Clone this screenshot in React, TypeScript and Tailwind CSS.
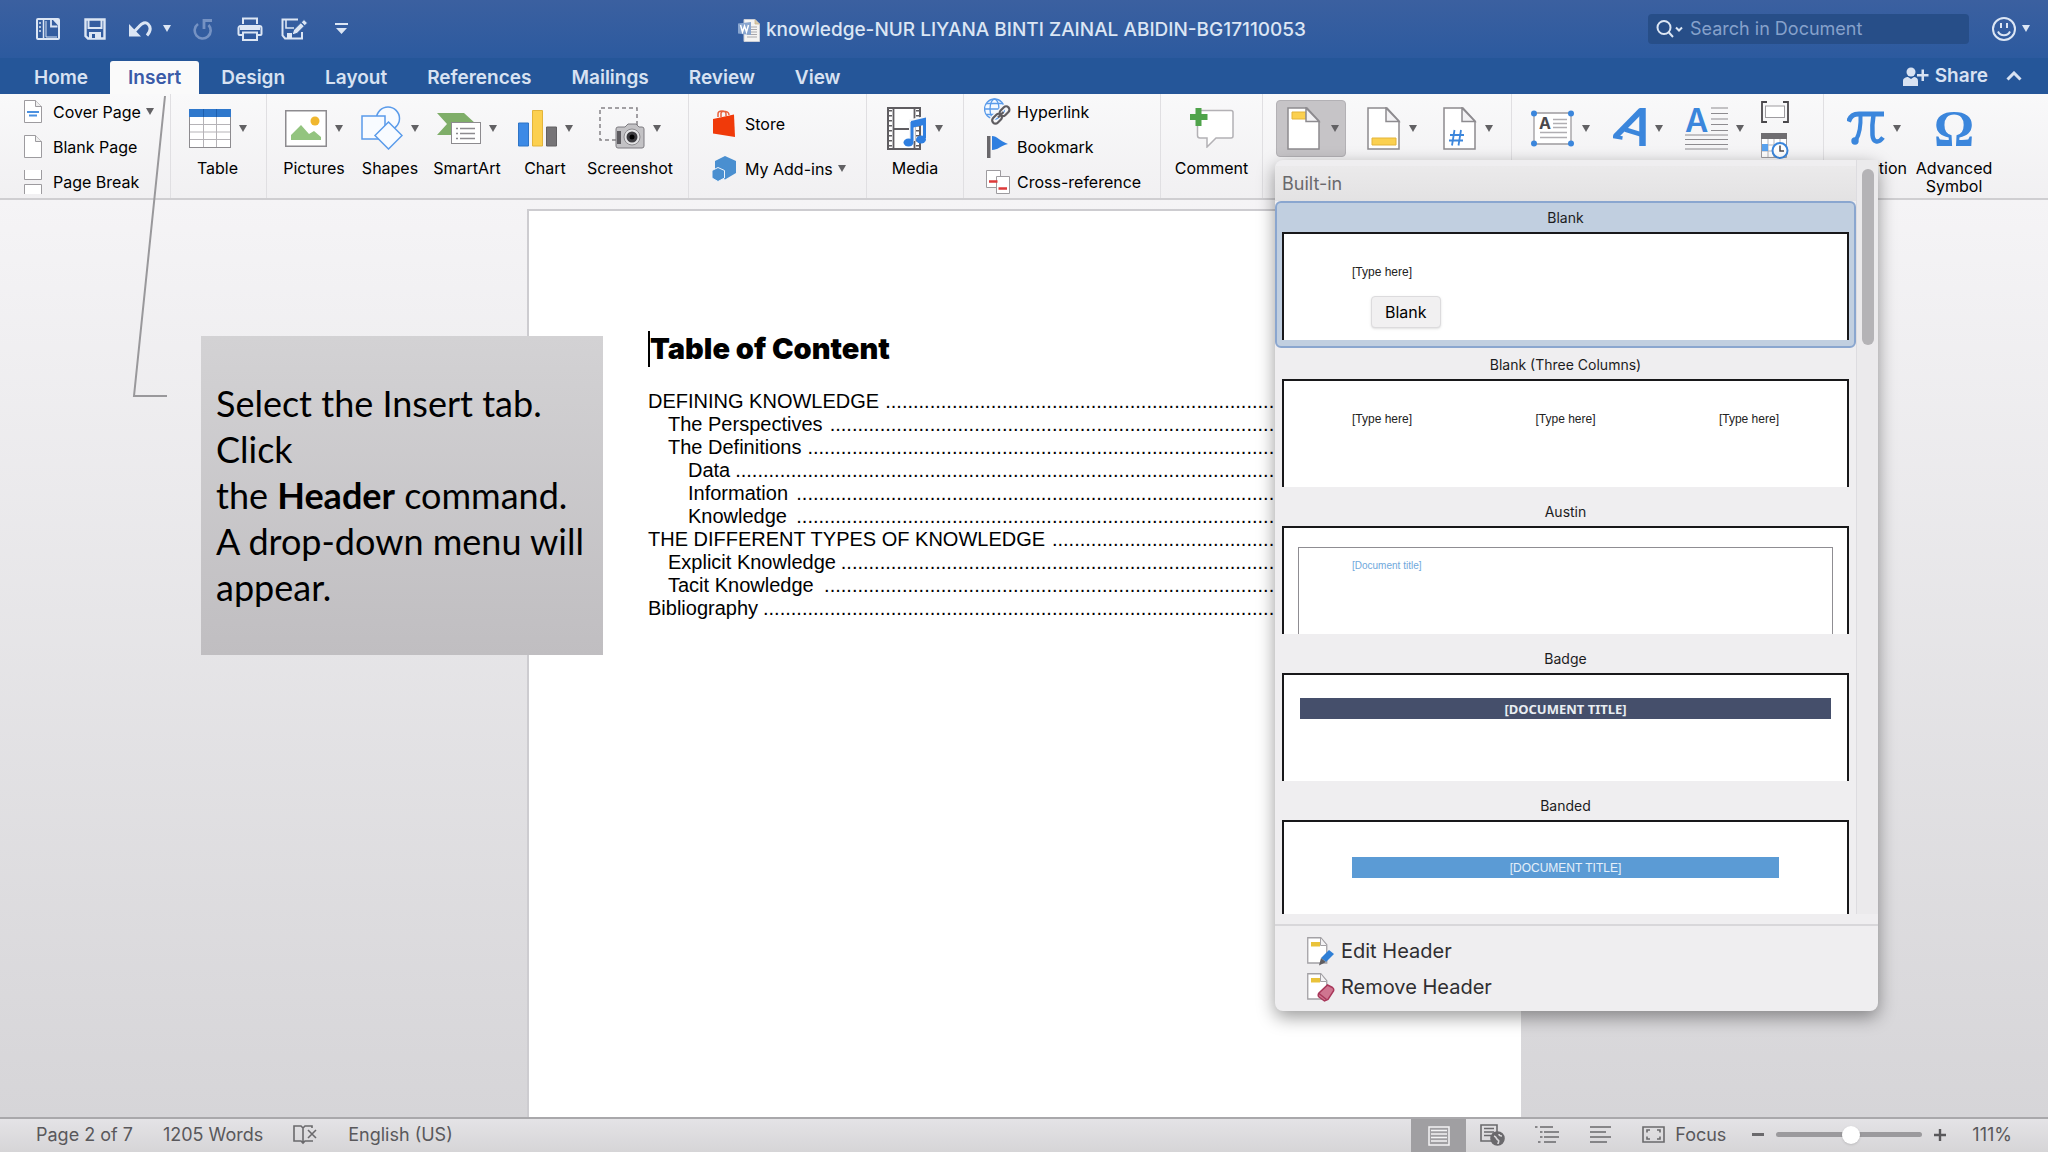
import React from 'react';

const Caret = ({ className = 'text-[#626164]' }: { className?: string }) => (
  <svg width="8" height="7" viewBox="0 0 8 7" className={`shrink-0 ${className}`} aria-hidden="true">
    <path d="M0 0h8L4 7z" fill="currentColor" />
  </svg>
);

/* ---------- quick access icons ---------- */

const SidebarIcon = () => (
  <svg width="24" height="22" viewBox="0 0 24 22" fill="none" stroke="currentColor" strokeWidth="2">
    <rect x="1" y="1" width="22" height="20" rx="1" />
    <path d="M7.500 1v20" strokeWidth="1.500" />
    <path d="M4 4v2M4 8v2M4 12v2" strokeWidth="1.500" />
    <path d="M15 2v6.500h6.500" strokeWidth="1.800" />
    <path d="m16 1 6 6.500V1z" fill="currentColor" stroke="none" />
    <path d="M10 3v16h11" strokeWidth="1" />
  </svg>
);
const SaveIcon = () => (
  <svg width="22" height="22" viewBox="0 0 22 22" fill="none" stroke="currentColor" strokeWidth="2.400">
    <path d="M1.500 1.500h19v19H4l-2.500-2.500z" />
    <path d="M4.500 1.500V10h13V1.500" strokeWidth="2" />
    <path d="M5 21v-7h12v7" fill="currentColor" stroke="none" />
    <path d="M8 16h3v4H8z" fill="#2e5a9d" stroke="none" />
  </svg>
);
const UndoIcon = () => (
  <svg width="24" height="18" viewBox="0 0 24 18" fill="none" stroke="currentColor" strokeWidth="3">
    <path d="M4 14 11 6.500C14 3 17.500 1.500 20 4c3.500 3.500 2 8-1 11.500" />
    <path d="M1 4v12.500h12z" fill="currentColor" stroke="none" />
  </svg>
);
const RedoIcon = () => (
  <svg width="20" height="22" viewBox="0 0 20 22" fill="none" stroke="currentColor" strokeWidth="2.600">
    <path d="M5 6a8 8 0 1 0 10.500 1" />
    <path d="M11 11V2.500h8" strokeWidth="2.800" />
  </svg>
);
const PrintIcon = () => (
  <svg width="26" height="24" viewBox="0 0 26 24" fill="none" stroke="currentColor" strokeWidth="2">
    <path d="M6 7V1.500h14V7" />
    <path d="M5 18H2.500a1 1 0 0 1-1-1V11a2 2 0 0 1 2-2h19a2 2 0 0 1 2 2v6a1 1 0 0 1-1 1H21" />
    <path d="M3 8h20v5H3z" fill="currentColor" stroke="none" />
    <rect x="6" y="15.500" width="14" height="7.500" />
  </svg>
);
const EditSaveIcon = () => (
  <svg width="28" height="22" viewBox="0 0 28 22" fill="none" stroke="currentColor" strokeWidth="2">
    <path d="M17 1.500H1.500v16L4 20.500h17V14" />
    <path d="M5 2v8h8" strokeWidth="1.600" />
    <path d="m11 17 1.500-5L23 1.500l3.500 3.500L16 15.500z" fill="currentColor" stroke="#2e5a9d" strokeWidth="1" />
    <path d="m20 4.500 3.500 3.500" stroke="#2e5a9d" strokeWidth="1.200" />
    <path d="M6 15h5v5H6z" fill="currentColor" stroke="none" />
  </svg>
);
const CustomizeIcon = () => (
  <svg width="13" height="12" viewBox="0 0 13 12" fill="currentColor">
    <path d="M0 0h13v2H0zM1 5h11l-5.500 6z" />
  </svg>
);
const WordDocIcon = () => (
  <svg width="22" height="23" viewBox="0 0 22 23">
    <path d="M6 .5h11L21.500 5v17.500H6z" fill="#f5f4f2" stroke="#c9cdd6" />
    <path d="M17 .5V5h4.500" fill="#d9c9a8" stroke="#c9b48c" strokeWidth=".8" />
    <path d="M9 8h10M9 10.500h10M9 13h10M9 15.500h10M9 18h10" stroke="#a9a8ac" />
    <path d="M0 4.500 13 3v13L0 14.500z" fill="#88a5cf" />
    <path d="m2.500 6 2 7 2-6 2 6L10.500 6" fill="none" stroke="#fff" strokeWidth="1.500" />
  </svg>
);

/* ---------- ribbon icons ---------- */

const CoverPageIcon = () => (
  <svg width="18" height="23" viewBox="0 0 18 23" fill="#fff" stroke="#9d9b9f">
    <path d="M.5.500h11l6 6v16H.5z" />
    <path d="M11.500.5v6h6" fill="#eee" />
    <path d="M3 12h12M5 15.500h8" stroke="#4a90e0" strokeWidth="2" />
  </svg>
);
const BlankPageIcon = () => (
  <svg width="18" height="23" viewBox="0 0 18 23" fill="#fff" stroke="#9d9b9f">
    <path d="M.5.500h11l6 6v16H.5z" />
    <path d="M11.500.5v6h6" fill="#eee" />
  </svg>
);
const PageBreakIcon = () => (
  <svg width="18" height="24" viewBox="0 0 18 24" fill="#fff" stroke="#9d9b9f">
    <path d="M.5 0v9.500h17V0M.5 24v-9.500h17V24" />
  </svg>
);
const TableIcon = () => (
  <svg width="42" height="39" viewBox="0 0 42 39">
    <rect x=".5" y=".5" width="41" height="38" fill="#fff" stroke="#8d8b8f" />
    <path d="M0 0h42v8H0z" fill="#2f78cc" />
    <path d="M14.500 8v30M27.500 8v30M1 15.500h40M1 23h40M1 30.500h40" stroke="#b5b3b7" />
    <path d="M14.500 0v8M27.500 0v8" stroke="#1d5fae" />
  </svg>
);
const PicturesIcon = () => (
  <svg width="42" height="37" viewBox="0 0 42 37">
    <rect x=".75" y=".75" width="40.500" height="35.500" fill="#fff" stroke="#8d8b8f" strokeWidth="1.500" />
    <path d="M6 30V25l10-10 8 9 5-3 7 6v3z" fill="#93c47f" />
    <circle cx="30" cy="11" r="4.500" fill="#f0b72f" />
  </svg>
);
const ShapesIcon = () => (
  <svg width="42" height="44" viewBox="0 0 42 44" fill="#f8fbff" stroke="#5a9bea" strokeWidth="1.500">
    <circle cx="27" cy="12.500" r="11.500" />
    <path d="M1 10h23v23H1z" />
    <path d="m27.500 16 13.500 13.500L27.500 43 14 29.500z" />
  </svg>
);
const SmartArtIcon = () => (
  <svg width="44" height="33" viewBox="0 0 44 33">
    <path d="M0 1h27l12 11-12 11H0l10-11z" fill="#7fae69" />
    <rect x="14.500" y="10.500" width="29" height="21" fill="#fff" stroke="#8d8b8f" />
    <path d="M23 16.500h15M23 21.500h15M23 26.500h15M19 16.500h2M19 21.500h2M19 26.500h2" stroke="#8d8b8f" strokeWidth="1.400" />
  </svg>
);
const ChartIcon = () => (
  <svg width="39" height="37" viewBox="0 0 39 37">
    <path d="M.5 13h10v23H.5z" fill="#3d8ae6" stroke="#2f74c6" />
    <path d="M14.500.5h10V36h-10z" fill="#fcd04f" stroke="#e3b43a" />
    <path d="M28.500 17h10v19h-10z" fill="#767477" stroke="#626063" />
  </svg>
);
const ScreenshotIcon = () => (
  <svg width="46" height="42" viewBox="0 0 46 42">
    <path d="M17 33H1V1h37v17" fill="none" stroke="#858387" strokeWidth="1.500" strokeDasharray="4 3" />
    <path d="M17 22a2 2 0 0 1 2-2h7l3-3h8l3 3h3a2 2 0 0 1 2 2v17a2 2 0 0 1-2 2H19a2 2 0 0 1-2-2z" fill="#c3c2c5" stroke="#7d7b80" />
    <path d="M18 24h4v13h-4z" fill="#5d5b60" />
    <circle cx="33" cy="30" r="8" fill="#e4e4e6" stroke="#8d8b8f" />
    <circle cx="33" cy="30" r="5.500" fill="#3d3c40" />
    <circle cx="33" cy="30" r="2.500" fill="#000" />
  </svg>
);
const StoreIcon = () => (
  <svg width="23" height="27" viewBox="0 0 23 27">
    <path d="M6 7V4c0-4 8-4 8 0v2M9 7V3c1-3 8-2 8 2" fill="none" stroke="#e8613c" strokeWidth="1.500" />
    <path d="M1 9 22 4.500 23 27 1 23.500z" fill="#f03a0a" />
  </svg>
);
const AddinsIcon = () => (
  <svg width="25" height="26" viewBox="0 0 25 26">
    <path d="m13 0 11 5v12l-11 6.500L3 18V5z" fill="#4a8fd0" />
    <path d="m6 11.500 6.500 3v7.500L6 25.500 0 22v-7.500z" fill="#4a8fd0" stroke="#eef4fb" />
  </svg>
);
const MediaIcon = () => (
  <svg width="40" height="43" viewBox="0 0 40 43">
    <path d="M1 1h32v41H1z" fill="#fff" stroke="#5f5d61" strokeWidth="2" />
    <path d="M6.500 1v41M27.500 1v41M6.500 22h21" stroke="#5f5d61" strokeWidth="1.800" />
    <path d="M3.500 3v38M30.500 3v38" stroke="#5f5d61" strokeWidth="3" strokeDasharray="1.500 3.500" />
    <path d="M25 34V15l13-3v20" fill="none" stroke="#f6f6f7" strokeWidth="6" />
    <path d="M24 14l15-3.500v7L24 21z" fill="#2f7fe0" />
    <path d="M25 34V15M37.500 31V12" stroke="#2f7fe0" strokeWidth="3" />
    <ellipse cx="21.500" cy="35.500" rx="5" ry="4" fill="#2f7fe0" />
    <ellipse cx="34" cy="32.500" rx="5" ry="4" fill="#2f7fe0" />
  </svg>
);
const HyperlinkIcon = () => (
  <svg width="27" height="27" viewBox="0 0 27 27" fill="none">
    <g stroke="#5a9bea" strokeWidth="1.300">
      <circle cx="10.500" cy="11" r="10" fill="#f4f9ff" />
      <ellipse cx="10.500" cy="11" rx="4.500" ry="10" />
      <path d="M.5 11h20M2.500 5.500h16M2.500 16.500h16" />
    </g>
    <g stroke="#f6f6f7" strokeWidth="5">
      <rect x="15" y="10" width="11" height="6.500" rx="3.200" transform="rotate(-45 20.500 13.200)" />
      <rect x="7.500" y="17.500" width="11" height="6.500" rx="3.200" transform="rotate(-45 13 20.700)" />
    </g>
    <g stroke="#5f5d61" strokeWidth="2.200">
      <rect x="15" y="10" width="11" height="6.500" rx="3.200" transform="rotate(-45 20.500 13.200)" />
      <rect x="7.500" y="17.500" width="11" height="6.500" rx="3.200" transform="rotate(-45 13 20.700)" />
      <path d="m14 19.500 5.500-5.500" />
    </g>
  </svg>
);
const BookmarkIcon = () => (
  <svg width="21" height="24" viewBox="0 0 21 24">
    <path d="M0 1h3.500v22H0z" fill="#69676b" />
    <path d="M5 1c5 0 8 5 16 8-8 2-10 6-16 6z" fill="#2f7fe0" />
  </svg>
);
const CrossRefIcon = () => (
  <svg width="24" height="24" viewBox="0 0 24 24">
    <path d="M.5.5h14v17H.5z" fill="#fff" stroke="#9d9b9f" />
    <path d="M10.500 6.500h13v17h-13z" fill="#fff" stroke="#9d9b9f" />
    <path d="M3 11.500h8.500M12.500 18.500h8.500" stroke="#dd3a3a" strokeWidth="2.400" />
  </svg>
);
const CommentIcon = () => (
  <svg width="44" height="40" viewBox="0 0 44 40">
    <path d="M10 2.500h31a2 2 0 0 1 2 2V28a2 2 0 0 1-2 2H26l-9 9v-9h-7a2.500 2.500 0 0 1-2.500-2.500V5z" fill="#fff" stroke="#b3b1b5" strokeWidth="1.500" />
    <path d="M5.500 0h6v6h6v6h-6v6h-6v-6H0V6h5.500z" fill="#4fa34a" />
  </svg>
);
const PageShape = ({ children }: { children: React.ReactNode }) => (
  <svg width="34" height="43" viewBox="0 0 34 43">
    <path d="M1 1h19l12 13v28H1z" fill="#fff" stroke="#8d8b8f" strokeWidth="1.500" />
    {children}
    <path d="M19 1v13.500h13z" fill="#f3f2f4" stroke="#8d8b8f" strokeWidth="1.500" />
  </svg>
);
const HeaderIcon = () => (
  <PageShape>
    <path d="M5 5h14v7H5z" fill="#fbd04f" stroke="#e3b43a" />
  </PageShape>
);
const FooterIcon = () => (
  <PageShape>
    <path d="M5 31h24v7H5z" fill="#fbd04f" stroke="#e3b43a" />
  </PageShape>
);
const PageNumberIcon = () => (
  <PageShape>
    <path d="M11.500 23 9 38.500M18 23l-2.500 15.500M7 28h14M6 33.500h14" stroke="#3b86dc" strokeWidth="1.800" />
  </PageShape>
);
const TextBoxIcon = () => (
  <svg width="43" height="37" viewBox="0 0 43 37">
    <path d="M3 3h37v31H3z" fill="#fff" stroke="#9d9b9f" strokeWidth="1.300" />
    <text x="8" y="19" fontFamily="Inter" fontWeight="700" fontSize="16" fill="#4a484c">A</text>
    <path d="M22 9.500h14M22 13.500h14M22 17.500h14M9 22.500h27M9 27.500h27" stroke="#b0aeb2" strokeWidth="1.300" />
    <g fill="#3b86dc">
      <circle cx="3" cy="3.500" r="3" /><circle cx="40" cy="3.500" r="3" />
      <circle cx="3" cy="33.500" r="3" /><circle cx="40" cy="33.500" r="3" />
    </g>
  </svg>
);
const WordArtIcon = () => (
  <svg width="34" height="42" viewBox="0 0 34 42" fill="none" stroke="#3b86dc">
    <path d="M2.500 29.500 28 3.500" strokeWidth="6" />
    <path d="M29.500 1v38" strokeWidth="6.500" />
    <path d="M12 22.500 30 28" strokeWidth="4.500" />
    <path d="M0 29.500 9.500 31" strokeWidth="3.500" />
  </svg>
);
const DropCapIcon = () => (
  <svg width="43" height="43" viewBox="0 0 43 43" fill="none">
    <text x="0" y="25" fontFamily="Inter" fontWeight="600" fontSize="32" fill="#3b86dc">A</text>
    <path d="M26 1h17M26 6.500h17M26 12h17M26 17.500h17M26 23.500h17M0 28h43M0 32.500h43M0 37.500h43M0 42h43" stroke="#8d8b8f" strokeWidth="1.200" />
  </svg>
);
const FieldIcon = () => (
  <svg width="28" height="22" viewBox="0 0 28 22" fill="none">
    <path d="M6 1H1v20h5M22 1h5v20h-5" stroke="#4a484c" strokeWidth="1.800" />
    <rect x="4.500" y="5" width="19" height="11.500" fill="#fff" stroke="#9d9b9f" />
  </svg>
);
const DateTimeIcon = () => (
  <svg width="28" height="26" viewBox="0 0 28 26">
    <path d="M.5.500h25v24H.5z" fill="#fff" stroke="#9d9b9f" />
    <path d="M0 0h26v6H0z" fill="#6f6d71" />
    <path d="M7 6v18M13 6v18M19 6v18M1 12h24M1 18h24" stroke="#b5b3b7" />
    <path d="M1 11h6v7H1z" fill="#5aa2ee" />
    <circle cx="19" cy="17.500" r="7.500" fill="#fff" stroke="#3b86dc" strokeWidth="2" />
    <path d="M19 12.500V18h4" fill="none" stroke="#4a484c" strokeWidth="1.500" />
  </svg>
);
const EquationIcon = () => (
  <svg width="38" height="36" viewBox="0 0 38 36" fill="none" stroke="#3b86dc">
    <path d="M1.500 11.500C4 5.500 6.500 4 12 4h25" strokeWidth="5" />
    <path d="M13.500 5c.5 12-1 19-4.500 25" strokeWidth="4" />
    <circle cx="8" cy="31" r="3.700" fill="#3b86dc" stroke="none" />
    <path d="M26.500 5c-1.500 9-1.500 14-1 20 .5 7 5.500 9 10.500 2.500" strokeWidth="4.500" />
  </svg>
);

/* ---------- ribbon building blocks ---------- */

const BigButton = ({ icon, label, caret, width }: { icon: React.ReactNode; label?: React.ReactNode; caret?: boolean; width: string }) => (
  <button type="button" className={`flex shrink-0 flex-col items-center gap-2 pt-[11px] ${width}`}>
    <span className="flex h-[46px] items-center gap-2">
      {icon}
      {caret && <Caret />}
    </span>
    {label && <span className="text-center text-base leading-[18px]">{label}</span>}
  </button>
);

const SmallButton = ({ icon, label, caret, iconBox }: { icon: React.ReactNode; label: string; caret?: boolean; iconBox: string }) => (
  <button type="button" className="flex h-[35px] shrink-0 items-center whitespace-nowrap text-base leading-[18px]">
    <span className={`flex shrink-0 items-center ${iconBox}`}>{icon}</span>
    {label}
    {caret && <span className="ml-[5px]"><Caret /></span>}
  </button>
);

const Group = ({ children, className }: { children: React.ReactNode; className: string }) => (
  <div className={`relative flex shrink-0 border-r border-[#e0dfe2] ${className}`}>{children}</div>
);

/* ---------- header gallery ---------- */

const GalleryItem = ({ name, selected, children }: { name: string; selected?: boolean; children: React.ReactNode }) => (
  <button
    type="button"
    aria-pressed={!!selected}
    className={`flex h-[147px] w-full shrink-0 flex-col px-[5px] text-left ${selected ? 'rounded-md border-2 border-[#8aa6cf] bg-[#c1cfe0]' : 'border-2 border-transparent'}`}
  >
    <span className="flex h-[29px] w-full items-center justify-center text-sm text-[#1c1c1e]">{name}</span>
    <span className="relative block h-[108px] w-full border-2 border-b-0 border-[#18181a] bg-white">{children}</span>
  </button>
);

const TypeHere = () => <span className="text-xs text-[#222]">[Type here]</span>;

const EditHeaderIcon = () => (
  <svg width="28" height="29" viewBox="0 0 28 29">
    <path d="M.75.75h13l6 7V26H.75z" fill="#fff" stroke="#a3a1a5" strokeWidth="1.300" />
    <path d="M4 5h9v4.500H4z" fill="#e9c23a" />
    <path d="M13.500 1v7.500h6" fill="#f3f2f4" stroke="#a3a1a5" />
    <path d="m14 21 8-8 5 4-8 8z" fill="#2f7fd6" />
    <path d="m14 21 5 4-7 3.500z" fill="#5f5d61" />
  </svg>
);
const RemoveHeaderIcon = () => (
  <svg width="28" height="29" viewBox="0 0 28 29">
    <path d="M.75.75h13l6 7V26H.75z" fill="#fff" stroke="#a3a1a5" strokeWidth="1.300" />
    <path d="M4 5h9v4.500H4z" fill="#e9c23a" />
    <path d="M13.500 1v7.500h6" fill="#f3f2f4" stroke="#a3a1a5" />
    <path d="m20.500 12 5 2.500c1.500 1 1.500 2 1 3.500l-5.500 8.500-3.500 1.500-5.500-4c-1-1-1-2.500 0-4z" fill="#cf7590" stroke="#a8375a" strokeWidth="1.500" />
    <path d="m12 20.500 7.500 6" stroke="#a8375a" strokeWidth="1.500" />
  </svg>
);

const HeaderMenu = () => (
  <div className="absolute -left-px top-[60px] z-20 w-[603px] rounded-lg bg-[#efeef0] shadow-[0_6px_18px_rgba(0,0,0,0.4)]">
    <div className="flex">
      <div className="min-w-0 flex-1 border-r border-[#dddce0]">
        <h2 className="mt-1.5 h-[35px] bg-gradient-to-b from-[#ebeaeb] to-[#e3e2e3] pl-[7px] text-lg leading-9 text-[#6a696c]">Built-in</h2>
        <div className="flex h-[713px] flex-col overflow-hidden">
          <GalleryItem name="Blank" selected>
            <span className="flex px-[68px] pt-[30px] font-['Liberation_Sans',sans-serif]"><TypeHere /></span>
            <span role="tooltip" className="absolute left-[87px] top-[62px] rounded border border-[#dcdbdd] bg-[#f1f0f1] px-[13px] py-1 text-base leading-[22px] text-black shadow">Blank</span>
          </GalleryItem>
          <GalleryItem name="Blank (Three Columns)">
            <span className="flex justify-between px-[68px] pt-[30px] font-['Liberation_Sans',sans-serif]"><TypeHere /><TypeHere /><TypeHere /></span>
          </GalleryItem>
          <GalleryItem name="Austin">
            <span className="flex h-full px-3.5 pt-[19px]">
              <span className="block flex-1 border border-b-0 border-[#8f8d92] px-[53px] pt-2.5 font-['Liberation_Sans',sans-serif] text-[10px] leading-4 text-[#6fa8dc]">[Document title]</span>
            </span>
          </GalleryItem>
          <GalleryItem name="Badge">
            <span className="mx-4 mt-[23px] flex h-[21px] items-center justify-center bg-[#454f6b] font-['Noto_Sans',sans-serif] text-[13px] font-bold leading-5 text-[#e8edf2]">[DOCUMENT TITLE]</span>
          </GalleryItem>
          <GalleryItem name="Banded">
            <span className="mx-[68px] mt-[35px] flex h-[21px] items-center justify-center bg-[#5b9bd5] font-['Liberation_Sans',sans-serif] text-xs text-[#e6f0fa]">[DOCUMENT TITLE]</span>
          </GalleryItem>
        </div>
      </div>
      <div className="flex w-[21px] justify-center bg-[#ebeaec] pt-[9px]">
        <div className="h-[176px] w-3 rounded-full bg-[#b4b3b6]" />
      </div>
    </div>
    <div className="mt-2.5 flex flex-col border-t-2 border-[#d8d7da] pb-1.5 pl-8 pt-[7px]">
      <button type="button" className="flex h-9 items-center gap-1.5 text-xl text-[#2f2e31]"><EditHeaderIcon />Edit Header</button>
      <button type="button" className="flex h-9 items-center gap-1.5 text-xl text-[#2f2e31]"><RemoveHeaderIcon />Remove Header</button>
    </div>
  </div>
);

/* ---------- document ---------- */

const toc = [
  { text: 'DEFINING KNOWLEDGE', indent: 'pl-0', dots: 93 },
  { text: 'The Perspectives', indent: 'pl-5', dots: 103 },
  { text: 'The Definitions', indent: 'pl-5', dots: 107 },
  { text: 'Data', indent: 'pl-10', dots: 120 },
  { text: 'Information', indent: 'pl-10', dots: 109 },
  { text: 'Knowledge', indent: 'pl-10', dots: 109 },
  { text: 'THE DIFFERENT TYPES OF KNOWLEDGE', indent: 'pl-0', dots: 63 },
  { text: 'Explicit Knowledge', indent: 'pl-5', dots: 101 },
  { text: 'Tacit Knowledge', indent: 'pl-5', dots: 104 },
  { text: 'Bibliography', indent: 'pl-0', dots: 115 },
];

const tabs = ['Home', 'Insert', 'Design', 'Layout', 'References', 'Mailings', 'Review', 'View'];

export default function App() {
  return (
    <div className="flex min-h-screen flex-col overflow-hidden bg-[#d7d6d9] font-[Inter,sans-serif] text-black">
      {/* title bar */}
      <header className="grid h-[58px] grid-cols-[1fr_auto_1fr] items-center bg-gradient-to-b from-[#3b60a0] to-[#2c5a9f] text-[#dce6f4]">
        <div className="flex items-center pb-px pl-9">
          <button type="button" aria-label="Sidebar" className="w-12"><SidebarIcon /></button>
          <button type="button" aria-label="Save" className="w-11"><SaveIcon /></button>
          <button type="button" aria-label="Undo" className="flex w-[65px] items-center gap-[11px]"><UndoIcon /><Caret className="text-[#dce6f4]" /></button>
          <button type="button" aria-label="Redo" className="w-11 text-[#7592c3]"><RedoIcon /></button>
          <button type="button" aria-label="Print" className="w-11"><PrintIcon /></button>
          <button type="button" aria-label="Save as" className="w-[54px]"><EditSaveIcon /></button>
          <button type="button" aria-label="Customize toolbar"><CustomizeIcon /></button>
        </div>
        <h1 className="flex items-center gap-1.5 whitespace-nowrap pr-1 pt-0.5 text-[19px] font-medium"><WordDocIcon />knowledge-NUR LIYANA BINTI ZAINAL ABIDIN-BG17110053</h1>
        <div className="flex items-center justify-end pb-px pr-[18px]">
          <label className="flex h-[30px] w-[321px] items-center gap-[7px] rounded bg-[#274e88] pl-2">
            <svg width="27" height="18" viewBox="0 0 27 18" fill="none" stroke="#dce6f4" strokeWidth="2" className="shrink-0">
              <circle cx="8" cy="7.500" r="6.500" /><path d="m12.500 12 4.500 5M20 7.500l3 3 3-3" />
            </svg>
            <input type="search" aria-label="Search in Document" placeholder="Search in Document" className="w-full bg-transparent text-lg outline-none placeholder:text-[#86a1cb]" />
          </label>
          <button type="button" aria-label="Feedback" className="ml-[23px] flex items-center gap-1.5">
            <svg width="24" height="24" viewBox="0 0 24 24" fill="none" stroke="currentColor" strokeWidth="2">
              <circle cx="12" cy="12" r="11" /><path d="M9 6v5M15 6v5M6 14.500c2.500 5 9.500 5 12 0" />
            </svg>
            <Caret className="text-[#dce6f4]" />
          </button>
        </div>
      </header>

      {/* tab strip */}
      <nav className="flex h-9 items-end justify-between bg-[#255699] pl-3.5 pr-[26px] text-[19px] font-semibold text-[#d8e2f2]">
        <div className="flex">
          {tabs.map((t) => (
            <button key={t} type="button" className={`mx-0.5 h-[33px] rounded-t-[3px] px-[18px] leading-[31px] ${t === 'Insert' ? 'bg-[#fafafa] text-[#3a5ba8]' : ''}`}>{t}</button>
          ))}
        </div>
        <div className="flex h-9 items-center gap-[18px]">
          <button type="button" className="flex items-center gap-1.5">
            <svg width="26" height="19" viewBox="0 0 26 19" fill="currentColor">
              <circle cx="8" cy="5" r="4.500" /><path d="M0 19v-5c0-3 3-4 5-4l3 2 3-2c2 0 4 1 4 4v5z" /><path d="M18.500 2.500h2.500V7h4.500v2.500H21V14h-2.500V9.500H14V7h4.500z" />
            </svg>
            Share
          </button>
          <button type="button" aria-label="Collapse ribbon">
            <svg width="16" height="10" viewBox="0 0 16 10" fill="none" stroke="currentColor" strokeWidth="3"><path d="m1.500 8.500 6.500-6.500 6.500 6.500" /></svg>
          </button>
        </div>
      </nav>

      {/* ribbon */}
      <section aria-label="Insert" className="relative z-10 flex h-[106px] border-b-2 border-[#cfced1] bg-gradient-to-b from-[#f9f9fa] to-[#f1f0f2]">
        <Group className="w-[171px] flex-col pl-6">
          <SmallButton icon={<CoverPageIcon />} label="Cover Page" caret iconBox="w-[29px]" />
          <SmallButton icon={<BlankPageIcon />} label="Blank Page" iconBox="w-[29px]" />
          <SmallButton icon={<PageBreakIcon />} label="Page Break" iconBox="w-[29px]" />
        </Group>
        <Group className="w-[96px] justify-center pr-0.5">
          <BigButton icon={<TableIcon />} label="Table" caret width="w-[76px]" />
        </Group>
        <Group className="w-[422px] pl-[9px]">
          <BigButton icon={<PicturesIcon />} label="Pictures" caret width="w-[76px]" />
          <BigButton icon={<ShapesIcon />} label="Shapes" caret width="w-[76px]" />
          <BigButton icon={<SmartArtIcon />} label="SmartArt" caret width="w-[78px]" />
          <BigButton icon={<ChartIcon />} label="Chart" caret width="w-[78px]" />
          <BigButton icon={<ScreenshotIcon />} label="Screenshot" caret width="w-[92px]" />
        </Group>
        <Group className="w-[178px] flex-col gap-2.5 pl-[23px] pt-3">
          <SmallButton icon={<StoreIcon />} label="Store" iconBox="w-[33px]" />
          <SmallButton icon={<AddinsIcon />} label="My Add-ins" caret iconBox="w-[33px]" />
        </Group>
        <Group className="w-[97px] justify-center">
          <BigButton icon={<MediaIcon />} label="Media" caret width="w-[76px]" />
        </Group>
        <Group className="w-[197px] flex-col pl-5">
          <SmallButton icon={<HyperlinkIcon />} label="Hyperlink" iconBox="w-[33px]" />
          <SmallButton icon={<BookmarkIcon />} label="Bookmark" iconBox="w-[33px] pl-[3px]" />
          <SmallButton icon={<CrossRefIcon />} label="Cross-reference" iconBox="w-[33px] pl-0.5" />
        </Group>
        <Group className="w-[102px] justify-center">
          <BigButton icon={<CommentIcon />} label="Comment" width="w-[76px]" />
        </Group>
        <Group className="w-[249px] pl-[13px]">
          <div className="relative mt-1.5">
            <button type="button" aria-label="Header" aria-expanded="true" className="flex h-[57px] w-[70px] items-center justify-center gap-2.5 rounded border border-[#b3b1b5] bg-[#c6c4c7] pl-1"><HeaderIcon /><Caret /></button>
            <HeaderMenu />
          </div>
          <BigButton icon={<FooterIcon />} caret width="ml-2 w-[76px]" />
          <BigButton icon={<PageNumberIcon />} caret width="w-[76px]" />
        </Group>
        <Group className="w-[312px] pl-[9px]">
          <BigButton icon={<TextBoxIcon />} caret width="w-[78px]" />
          <BigButton icon={<WordArtIcon />} caret width="w-[78px]" />
          <BigButton icon={<DropCapIcon />} caret width="w-[74px]" />
          <div className="flex flex-col gap-2.5 pl-[10px] pt-[7px]">
            <button type="button" aria-label="Field"><FieldIcon /></button>
            <button type="button" aria-label="Date and time"><DateTimeIcon /></button>
          </div>
        </Group>
        <div className="flex flex-1 pl-3">
          <BigButton icon={<EquationIcon />} label="Equation" caret width="w-[76px]" />
          <BigButton icon={<span className="font-['Liberation_Serif',serif] text-[50px] font-bold leading-none text-[#3b86dc]">Ω</span>} label="Advanced Symbol" width="w-[84px]" />
        </div>
      </section>

      {/* document canvas */}
      <main className="relative flex flex-1 flex-col items-center bg-gradient-to-b from-[#f5f4f6] to-[#d6d5d8] pt-[9px]">
        <article className="w-[994px] flex-1 border-l-2 border-t-2 border-[#cdccd0] bg-white px-[119px] pt-[120px] font-['Liberation_Sans',sans-serif]">
          <h2 className="flex h-9 items-center border-l-2 border-black font-[Inter,sans-serif] text-[29px] font-black leading-9">Table of Content</h2>
          <ul className="mt-[23px] text-xl leading-[23px]">
            {toc.map((r) => (
              <li key={r.text} className={`flex justify-between whitespace-nowrap ${r.indent}`}>
                <a href="#">{r.text}</a>
                <span aria-hidden="true">{'.'.repeat(r.dots)}</span>
              </li>
            ))}
          </ul>
        </article>

        <aside className="absolute left-[201px] top-[136px] z-10 flex h-[319px] w-[402px] flex-col justify-center bg-gradient-to-b from-[#d3d2d4] to-[#c0bec1] px-[15px] pb-0.5 font-[Lato,sans-serif] text-4xl leading-[46px]">
          <p>Select the Insert tab.</p>
          <p>Click</p>
          <p className="whitespace-nowrap">the <b>Header</b> command.</p>
          <p className="whitespace-nowrap">A drop-down menu will</p>
          <p>appear.</p>
        </aside>
        <svg className="absolute -top-[106px] left-[130px] z-10" width="42" height="306" viewBox="0 0 42 306" fill="none" aria-hidden="true">
          <path d="M35 2 4 302h33" stroke="#99989b" strokeWidth="2" />
        </svg>
      </main>

      {/* status bar */}
      <footer className="flex h-[35px] items-center justify-between border-t-2 border-[#a9a8ab] bg-gradient-to-b from-[#e4e3e6] to-[#d6d5d7] pl-9 pr-9 text-lg text-[#59585b]">
        <div className="flex items-center gap-[30px] pb-0.5">
          <span>Page 2 of 7</span>
          <span>1205 Words</span>
          <svg width="25" height="20" viewBox="0 0 25 20" fill="none" stroke="#6a696c" strokeWidth="1.600">
            <path d="M10 3 8 1H1v15h7l2 2 2-2h8M10 3v16M10 3l2-2h7v2" /><path d="m15 5 8 8M23 5l-8 8" />
          </svg>
          <span>English (US)</span>
        </div>
        <div className="flex h-full items-center">
          <button type="button" aria-label="Print layout" className="flex h-full w-[55px] items-center justify-center bg-[#a09fa2]">
            <svg width="22" height="20" viewBox="0 0 22 20" fill="none" stroke="#f4f4f5" strokeWidth="1.500"><path d="M1 1h20v18H1zM3 4.500h16M3 8h16M3 11.500h16M3 15h16" /></svg>
          </button>
          <div className="flex h-full items-center pb-0.5">
            <button type="button" aria-label="Web layout" className="flex w-[52px] justify-center">
              <svg width="25" height="22" viewBox="0 0 25 22" fill="none" stroke="#6a696c" strokeWidth="1.600">
                <path d="M17 8V1H1v16h11M4 4.500h10M4 8h10M4 11.500h7" /><circle cx="17.500" cy="14.500" r="6.500" fill="#6a696c" /><path d="M14 12c3 1 2 3 4 4s0 2 0 4M19 10c0 2 2 2 3 2" stroke="#d8d7da" />
              </svg>
            </button>
            <button type="button" aria-label="Outline" className="flex w-[58px] justify-center">
              <svg width="24" height="17" viewBox="0 0 24 17" fill="none" stroke="#6a696c" strokeWidth="1.700"><path d="M0 1h2.500M5 1h13M5 6h2.500M9 6h15M5 11h2.500M9 11h15M3 16h2.500M9 16h12" /></svg>
            </button>
            <button type="button" aria-label="Draft" className="flex w-[48px] justify-center">
              <svg width="21" height="17" viewBox="0 0 21 17" fill="none" stroke="#6a696c" strokeWidth="1.700"><path d="M0 1h21M0 6h16M0 11h21M0 16h17" /></svg>
            </button>
            <button type="button" className="ml-[18px] flex items-center gap-2.5">
              <svg width="23" height="17" viewBox="0 0 23 17" fill="none" stroke="#6a696c" strokeWidth="1.600"><path d="M1 1h21v15H1z" /><path d="M5 6.500V4h3M15 4h3v2.500M18 10.500V13h-3M8 13H5v-2.500" /></svg>
              Focus
            </button>
            <button type="button" aria-label="Zoom out" className="ml-[26px] h-[3px] w-3 bg-[#6a696c]" />
            <input
              type="range"
              aria-label="Zoom"
              min={0}
              max={100}
              defaultValue={51}
              className="ml-3 h-[5px] w-[146px] appearance-none rounded-full bg-[#9b9a9d] [&::-webkit-slider-thumb]:h-[18px] [&::-webkit-slider-thumb]:w-[18px] [&::-webkit-slider-thumb]:appearance-none [&::-webkit-slider-thumb]:rounded-full [&::-webkit-slider-thumb]:bg-white [&::-webkit-slider-thumb]:shadow"
            />
            <button type="button" aria-label="Zoom in" className="ml-3 mr-[26px]">
              <svg width="12" height="12" viewBox="0 0 12 12" stroke="#59585b" strokeWidth="2.400"><path d="M0 6h12M6 0v12" /></svg>
            </button>
            <span>111%</span>
          </div>
        </div>
      </footer>
    </div>
  );
}
